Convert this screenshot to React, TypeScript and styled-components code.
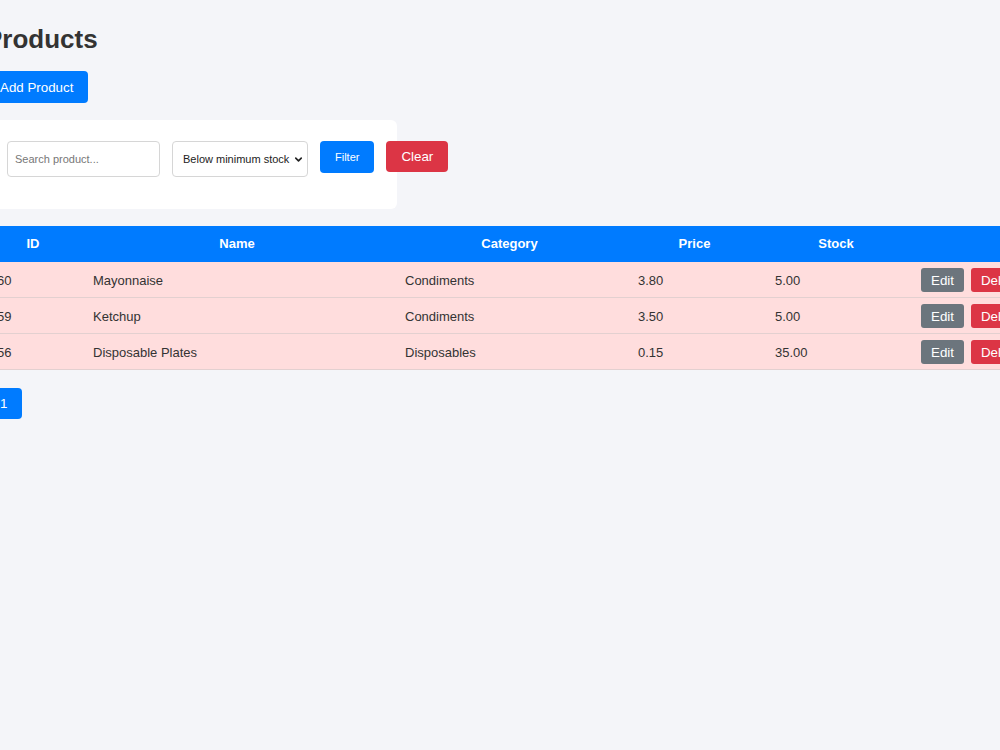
import React, { useState } from "react";
import styled, { createGlobalStyle } from "styled-components";
import { ChevronDown } from "lucide-react";

interface Product {
  id: number;
  name: string;
  category: string;
  price: string;
  stock: string;
}

const products: Product[] = [
  { id: 60, name: "Mayonnaise", category: "Condiments", price: "3.80", stock: "5.00" },
  { id: 59, name: "Ketchup", category: "Condiments", price: "3.50", stock: "5.00" },
  { id: 56, name: "Disposable Plates", category: "Disposables", price: "0.15", stock: "35.00" },
];

const GlobalStyle = createGlobalStyle`
  html, body {
    margin: 0;
    padding: 0;
    overflow: hidden;
    background: #f4f5f9;
    font-family: "Liberation Sans", Arial, sans-serif;
    color: #333;
  }
`;

const Page = styled.div`
  width: 1070px;
  min-height: 750px;
  margin-left: -15px;
  padding-top: 24px;
  box-sizing: border-box;
`;

const Title = styled.h2`
  margin: 0 0 16px;
  font-size: 26px;
  font-weight: bold;
  color: #333;
`;

const Button = styled.button<{ $variant?: "primary" | "danger" | "secondary"; $small?: boolean }>`
  border: none;
  border-radius: 4px;
  color: #fff;
  cursor: pointer;
  font-family: "Liberation Sans", Arial, sans-serif;
  font-size: ${(p) => (p.$small ? "11px" : "13.333px")};
  padding: 0 15px;
  height: 32px;
  background: ${(p) =>
    p.$variant === "danger" ? "#dc3545" : p.$variant === "secondary" ? "#6c757d" : "#007bff"};
`;

const AddButton = styled(Button)`
  display: block;
  margin-bottom: 17px;
`;

const FilterCard = styled.div`
  width: 412px;
  box-sizing: border-box;
  background: #fff;
  border-radius: 6px;
  padding: 21px 22px 32px;
`;

const FilterForm = styled.form`
  display: flex;
  align-items: flex-start;
  gap: 12px;
  white-space: nowrap;
`;

const SearchInput = styled.input`
  width: 153px;
  height: 36px;
  box-sizing: border-box;
  border: 1px solid #d6d6d6;
  border-radius: 4px;
  padding: 0 7px;
  font-family: "Liberation Sans", Arial, sans-serif;
  font-size: 11px;
  color: #333;
  &::placeholder {
    color: #777;
  }
`;

const SelectWrap = styled.div`
  position: relative;
  flex: none;
`;

const StockSelect = styled.select`
  appearance: none;
  width: 136px;
  height: 36px;
  box-sizing: border-box;
  border: 1px solid #d6d6d6;
  border-radius: 4px;
  padding: 0 0 0 10px;
  background: #fff;
  font-family: "Liberation Sans", Arial, sans-serif;
  font-size: 11px;
  color: #222;
`;

const SelectChevron = styled(ChevronDown)`
  position: absolute;
  right: 4px;
  top: 13px;
  pointer-events: none;
  color: #222;
`;

const SmallButton = styled(Button)`
  flex: none;
  height: ${(p) => (p.$small ? "32px" : "31px")};
`;

const Table = styled.table`
  width: 1070px;
  margin-top: 17px;
  border-collapse: collapse;
  table-layout: fixed;
  font-size: 13px;
`;

const HeadCell = styled.th`
  box-sizing: border-box;
  background: #007bff;
  color: #fff;
  font-weight: bold;
  text-align: center;
  height: 36px;
  padding: 0 12px 2px;
`;

const Row = styled.tr`
  background: #ffdddd;
`;

const Cell = styled.td`
  box-sizing: border-box;
  height: 36px;
  padding: 0 12px;
  text-align: left;
  white-space: nowrap;
  color: #333;
  box-shadow: inset 0 -1px 0 #e3d0d0;
`;

const ActionButton = styled(Button)`
  height: 24px;
  padding: 0 10px;
  border-radius: 3px;
  margin-right: 7px;
  vertical-align: middle;
`;

const Pagination = styled.div`
  display: flex;
  margin-top: 18px;
`;

const PageButton = styled(Button)`
  height: 31px;
`;

export default function App() {
  const [search, setSearch] = useState("");
  const [filter, setFilter] = useState("below");

  return (
    <>
      <GlobalStyle />
      <Page>
        <Title>Products</Title>
        <AddButton>Add Product</AddButton>
        <FilterCard>
          <FilterForm onSubmit={(e) => e.preventDefault()}>
            <SearchInput
              placeholder="Search product..."
              value={search}
              onChange={(e) => setSearch(e.target.value)}
            />
            <SelectWrap>
              <StockSelect value={filter} onChange={(e) => setFilter(e.target.value)}>
                <option value="all">All products</option>
                <option value="below">Below minimum stock</option>
              </StockSelect>
              <SelectChevron size={11} strokeWidth={3.5} />
            </SelectWrap>
            <SmallButton $small type="submit">
              Filter
            </SmallButton>
            <SmallButton $variant="danger" type="button" onClick={() => setSearch("")}>
              Clear
            </SmallButton>
          </FilterForm>
        </FilterCard>
        <Table>
          <colgroup>
            <col style={{ width: 96 }} />
            <col style={{ width: 312 }} />
            <col style={{ width: 233 }} />
            <col style={{ width: 137 }} />
            <col style={{ width: 146 }} />
            <col />
          </colgroup>
          <thead>
            <tr>
              <HeadCell>ID</HeadCell>
              <HeadCell>Name</HeadCell>
              <HeadCell>Category</HeadCell>
              <HeadCell>Price</HeadCell>
              <HeadCell>Stock</HeadCell>
              <HeadCell />
            </tr>
          </thead>
          <tbody>
            {products.map((p) => (
              <Row key={p.id}>
                <Cell>{p.id}</Cell>
                <Cell>{p.name}</Cell>
                <Cell>{p.category}</Cell>
                <Cell>{p.price}</Cell>
                <Cell>{p.stock}</Cell>
                <Cell>
                  <ActionButton $variant="secondary">Edit</ActionButton>
                  <ActionButton $variant="danger">Delete</ActionButton>
                </Cell>
              </Row>
            ))}
          </tbody>
        </Table>
        <Pagination>
          <PageButton>1</PageButton>
        </Pagination>
      </Page>
    </>
  );
}
